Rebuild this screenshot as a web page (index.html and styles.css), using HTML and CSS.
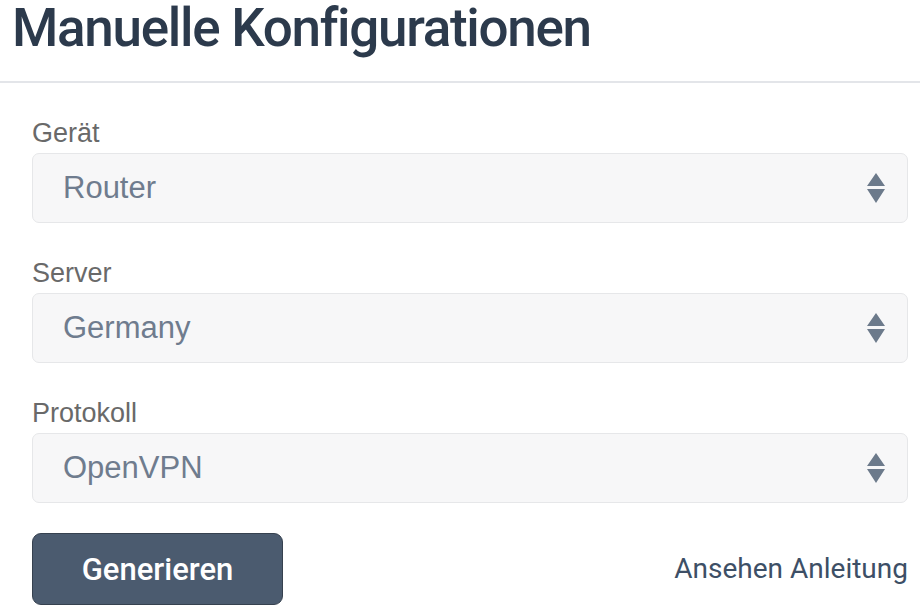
FILE: index.html
```html
<!DOCTYPE html>
<html lang="de">
<head>
<meta charset="utf-8">
<title>Manuelle Konfigurationen</title>
<link rel="stylesheet" href="styles.css">
</head>
<body>
<header class="page-header">
  <h1 class="title">Manuelle Konfigurationen</h1>
</header>
<main class="form">
  <div class="field">
    <label class="label">Gerät</label>
    <div class="select">
      <span class="value">Router</span>
      <svg class="arrows" viewBox="0 0 20 30" width="20" height="30"><path d="M10 0 L19 13 L1 13 Z M1 16 L19 16 L10 30 Z" fill="#6c7a8b"/></svg>
    </div>
  </div>
  <div class="field">
    <label class="label">Server</label>
    <div class="select">
      <span class="value">Germany</span>
      <svg class="arrows" viewBox="0 0 20 30" width="20" height="30"><path d="M10 0 L19 13 L1 13 Z M1 16 L19 16 L10 30 Z" fill="#6c7a8b"/></svg>
    </div>
  </div>
  <div class="field">
    <label class="label">Protokoll</label>
    <div class="select">
      <span class="value">OpenVPN</span>
      <svg class="arrows" viewBox="0 0 20 30" width="20" height="30"><path d="M10 0 L19 13 L1 13 Z M1 16 L19 16 L10 30 Z" fill="#6c7a8b"/></svg>
    </div>
  </div>
  <div class="actions">
    <button class="btn">Generieren</button>
    <a class="link" href="#">Ansehen Anleitung</a>
  </div>
</main>
</body>
</html>
```
FILE: styles.css
```css
html, body {
  margin: 0;
  padding: 0;
  background: #ffffff;
}
body {
  width: 920px;
  height: 608px;
  overflow: hidden;
  font-family: "Liberation Sans", Arial, sans-serif;
}
.page-header {
  height: 81px;
  border-bottom: 2px solid #e3e5e9;
  padding-left: 12px;
  box-sizing: content-box;
}
.title {
  margin: 0;
  padding-top: 2px;
  font-family: Roboto, "Liberation Sans", sans-serif;
  font-weight: 500;
  font-size: 53px;
  line-height: 52px;
  color: #2c3a4c;
  letter-spacing: -1.3px;
}
.form {
  padding: 32px 12px 0 32px;
  display: flex;
  flex-direction: column;
}
.field {
  display: flex;
  flex-direction: column;
  margin-bottom: 32px;
}
.label {
  font-size: 27px;
  line-height: 36px;
  color: #696969;
  margin-bottom: 2px;
}
.select {
  height: 70px;
  box-sizing: border-box;
  border: 1.5px solid #e6e7e9;
  border-radius: 7px;
  background: #f7f7f8;
  display: flex;
  align-items: center;
  justify-content: space-between;
  padding: 0 21px 0 30px;
}
.value {
  font-size: 31px;
  color: #6f7c8e;
}
.arrows {
  display: block;
}
.actions {
  display: flex;
  align-items: center;
  justify-content: space-between;
  margin-top: -2px;
}
.btn {
  width: 251px;
  height: 72px;
  background: #4b5b6f;
  border: 1.5px solid #36414f;
  border-radius: 9px;
  color: #ffffff;
  font-family: Roboto, "Liberation Sans", Arial, sans-serif;
  font-size: 31px;
  font-weight: 500;
  padding: 0;
}
.link {
  font-family: Roboto, "Liberation Sans", sans-serif;
  font-size: 28px;
  color: #3d4f66;
  text-decoration: none;
  margin-top: -2px;
}
```
